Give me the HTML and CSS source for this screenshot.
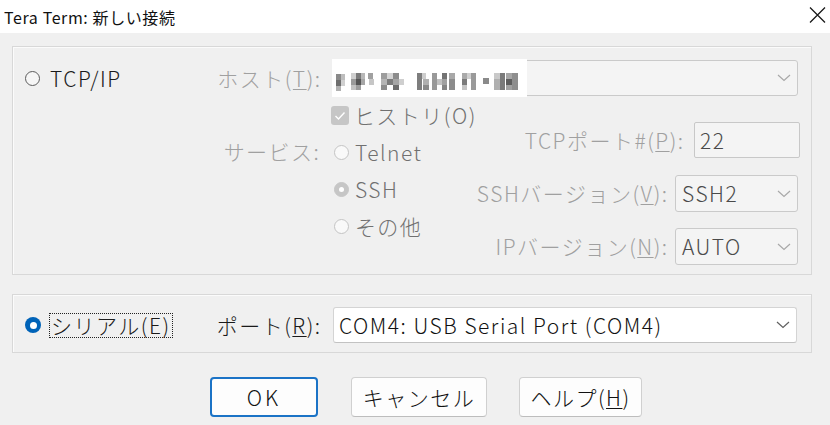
FILE: index.html
```html
<!DOCTYPE html>
<html lang="ja">
<head>
<meta charset="utf-8">
<title>Tera Term: 新しい接続</title>
<link rel="stylesheet" href="styles.css">
</head>
<body>
<div class="titlebar">
  <span class="title">Tera Term: 新しい接続</span>
  <svg class="close" width="17" height="16" viewBox="0 0 17 16"><path d="M1 0.5 L16 15.5 M16 0.5 L1 15.5" stroke="#1a1a1a" stroke-width="1.3" fill="none"/></svg>
</div>
<div class="dialog">
  <div class="group g1">
    <div class="row host-row">
      <div class="lead">
        <span class="radio-item"><span class="radio enabled"></span><span class="opt-text dark">TCP/IP</span></span>
        <span class="field-label">ホスト(<u>T</u>):</span>
      </div>
      <div class="combo disabled host-combo">
        <span class="mosaic">
          <svg width="195" height="38" viewBox="0 0 195 38">
            <rect x="4" y="15" width="5" height="6" fill="#8a8a8a"/><rect x="4" y="21" width="5" height="6" fill="#6e6e6e"/><rect x="4" y="27" width="5" height="5" fill="#b0b0b0"/><rect x="9" y="15" width="4" height="6" fill="#bdbdbd"/><rect x="9" y="21" width="4" height="6" fill="#d0d0d0"/>
            <rect x="19" y="14" width="5" height="6" fill="#cfcfcf"/><rect x="19" y="20" width="5" height="6" fill="#9a9a9a"/><rect x="19" y="26" width="5" height="5" fill="#c2c2c2"/><rect x="24" y="14" width="5" height="6" fill="#7a7a7a"/><rect x="24" y="20" width="5" height="6" fill="#555"/><rect x="24" y="26" width="5" height="5" fill="#9c9c9c"/><rect x="29" y="14" width="4" height="6" fill="#b8b8b8"/><rect x="29" y="20" width="4" height="6" fill="#a6a6a6"/>
            <rect x="36" y="14" width="5" height="6" fill="#a0a0a0"/><rect x="37" y="20" width="5" height="6" fill="#c6c6c6"/>
            <rect x="49" y="14" width="6" height="6" fill="#9d9d9d"/><rect x="49" y="20" width="6" height="6" fill="#b5b5b5"/><rect x="49" y="26" width="6" height="5" fill="#8d8d8d"/><rect x="55" y="14" width="6" height="6" fill="#d4d4d4"/><rect x="55" y="20" width="6" height="6" fill="#7c7c7c"/><rect x="61" y="14" width="6" height="6" fill="#8c8c8c"/><rect x="61" y="20" width="6" height="6" fill="#a5a5a5"/><rect x="61" y="26" width="6" height="5" fill="#6c6c6c"/><rect x="67" y="20" width="5" height="6" fill="#cfcfcf"/>
            <rect x="85" y="14" width="5" height="17" fill="#7e7e7e"/><rect x="90" y="14" width="4" height="6" fill="#cdcdcd"/><rect x="91" y="20" width="6" height="6" fill="#b0b0b0"/><rect x="91" y="26" width="6" height="5" fill="#8a8a8a"/>
            <rect x="100" y="14" width="5" height="17" fill="#999"/><rect x="105" y="20" width="5" height="6" fill="#c2c2c2"/><rect x="110" y="14" width="5" height="6" fill="#737373"/><rect x="110" y="20" width="5" height="6" fill="#a0a0a0"/><rect x="110" y="26" width="5" height="5" fill="#858585"/><rect x="117" y="14" width="6" height="6" fill="#a8a8a8"/><rect x="117" y="20" width="6" height="11" fill="#8c8c8c"/>
            <rect x="130" y="14" width="5" height="6" fill="#aaa"/><rect x="130" y="20" width="5" height="6" fill="#7a7a7a"/><rect x="130" y="26" width="5" height="5" fill="#c4c4c4"/><rect x="135" y="14" width="4" height="6" fill="#d0d0d0"/><rect x="139" y="14" width="5" height="17" fill="#9a9a9a"/>
            <rect x="151" y="19" width="6" height="6" fill="#8a8a8a"/>
            <rect x="162" y="14" width="6" height="6" fill="#c9c9c9"/><rect x="162" y="20" width="6" height="11" fill="#b0b0b0"/><rect x="168" y="14" width="5" height="17" fill="#7a7a7a"/><rect x="174" y="14" width="6" height="6" fill="#a6a6a6"/><rect x="174" y="20" width="6" height="6" fill="#5e5e5e"/><rect x="174" y="26" width="6" height="5" fill="#a0a0a0"/><rect x="180" y="14" width="6" height="17" fill="#8e8e8e"/>
          </svg>
        </span>
        <svg class="chev" width="14" height="8" viewBox="0 0 14 8"><path d="M1 1 L7 6.5 L13 1" stroke="#a8a8a8" stroke-width="1.2" fill="none"/></svg>
      </div>
    </div>
    <div class="lower">
      <div class="svc-col">
        <span class="field-label svc-label">サービス:</span>
      </div>
      <div class="opts">
        <div class="opt-row"><span class="checkbox"><svg width="12" height="10" viewBox="0 0 12 10"><path d="M1.5 5 L4.5 8 L10.5 1.5" stroke="#fff" stroke-width="1.4" fill="none"/></svg></span><span class="opt-text">ヒストリ(O)</span></div>
        <div class="opt-row"><span class="radio disabled"></span><span class="opt-text">Telnet</span></div>
        <div class="opt-row"><span class="radio disabled checked"></span><span class="opt-text">SSH</span></div>
        <div class="opt-row"><span class="radio disabled"></span><span class="opt-text">その他</span></div>
      </div>
      <div class="right-col">
        <div class="field-row tcp-row">
          <span class="field-label">TCPポート#(<u>P</u>):</span>
          <div class="textbox">22</div>
        </div>
        <div class="field-row ver-row">
          <span class="field-label">SSHバージョン(<u>V</u>):</span>
          <div class="combo disabled small-combo"><span class="value">SSH2</span><svg class="chev" width="14" height="8" viewBox="0 0 14 8"><path d="M1 1 L7 6.5 L13 1" stroke="#a8a8a8" stroke-width="1.2" fill="none"/></svg></div>
        </div>
        <div class="field-row ip-row">
          <span class="field-label">IPバージョン(<u>N</u>):</span>
          <div class="combo disabled small-combo"><span class="value">AUTO</span><svg class="chev" width="14" height="8" viewBox="0 0 14 8"><path d="M1 1 L7 6.5 L13 1" stroke="#a8a8a8" stroke-width="1.2" fill="none"/></svg></div>
        </div>
      </div>
    </div>
  </div>
  <div class="group g2">
    <div class="row serial-row">
      <div class="lead">
        <span class="radio-item"><span class="radio selected"></span><span class="opt-text dark focus">シリアル(E)</span></span>
        <span class="field-label dark">ポート(<u>R</u>):</span>
      </div>
      <div class="combo enabled serial-combo"><span class="value">COM4: USB Serial Port (COM4)</span><svg class="chev" width="14" height="8" viewBox="0 0 14 8"><path d="M1 1 L7 6.5 L13 1" stroke="#606060" stroke-width="1.2" fill="none"/></svg></div>
    </div>
  </div>
  <div class="buttons">
    <button class="btn default">OK</button>
    <button class="btn cancel">キャンセル</button>
    <button class="btn help">ヘルプ(<u>H</u>)</button>
  </div>
</div>
</body>
</html>
```

FILE: styles.css
```css
* { box-sizing: border-box; }
html, body { margin: 0; padding: 0; }
body {
  width: 830px;
  height: 425px;
  overflow: hidden;
  background: #f0f0f0;
  font-family: "Noto Sans CJK JP", "Noto Sans", sans-serif;
  font-size: 21px;
  font-weight: 300;
  letter-spacing: 1.5px;
  color: #000;
}
.titlebar {
  height: 33px;
  background: #fff;
  display: flex;
  align-items: center;
  justify-content: space-between;
  padding: 0 4px 0 4px;
}
.title {
  font-size: 16px;
  font-weight: 400;
  letter-spacing: 0.6px;
  color: #111;
  line-height: 1;
}
.close { margin-right: 0; margin-top: -4px; }
.dialog { padding: 13px 18px 0 12px; }
.group {
  border: 1px solid #d8d8d8;
  box-shadow: inset 1px 1px 0 #fbfbfb;
  padding-right: 13px;
}
.g1 { padding-top: 13px; padding-bottom: 9px; }
.g2 { margin-top: 19px; padding-top: 12px; padding-bottom: 9px; }
.row { display: flex; align-items: center; }
.lead {
  width: 307px;
  display: flex;
  align-items: center;
  justify-content: space-between;
  padding-left: 12px;
}
.radio-item { display: flex; align-items: center; gap: 10px; }
.field-label { color: #a0a0a0; white-space: nowrap; line-height: 1; margin-right: -1.5px; }
.field-label.dark { color: #1a1a1a; }
.dark { color: #1a1a1a; }
u { text-decoration-thickness: 1px; text-underline-offset: 2px; }
.opt-text { color: #707070; line-height: 1; white-space: nowrap; }
.opt-text.dark { color: #1a1a1a; }
.focus { outline: 1px dotted #222; outline-offset: 1px; }

.radio {
  display: inline-block;
  width: 15px;
  height: 15px;
  border-radius: 50%;
  flex: none;
}
.radio.enabled { border: 1.5px solid #5c5c5c; background: #f6f6f6; }
.radio.disabled { border: 1px solid #c4c4c4; background: #f9f9f9; }
.radio.disabled.checked { background: #c6c6c6; border-color: #c6c6c6; position: relative; }
.radio.disabled.checked::after {
  content: ""; position: absolute; left: 4px; top: 4px; width: 5px; height: 5px; border-radius: 50%; background: #fff;
}
.radio.selected { width: 16px; height: 16px; background: #0063b8; position: relative; }
.radio.selected::after {
  content: ""; position: absolute; left: 4.5px; top: 4.5px; width: 7px; height: 7px; border-radius: 50%; background: #fff;
}

.combo {
  display: flex;
  align-items: center;
  justify-content: space-between;
  border: 1px solid #cacaca;
  border-radius: 3px;
  background: #f4f4f4;
  height: 36px;
  padding: 0 6px 0 6px;
}
.combo .chev { flex: none; }
.host-combo { flex: 1; margin-left: 12px; padding-left: 0; position: relative; }
.mosaic { display: block; width: 195px; height: 38px; background: #fff; margin: -1px 0 -1px -1px; }
.mosaic svg { display: block; }
.value { color: #4a4a4a; line-height: 1; }
.serial-combo { flex: 1; margin-left: 13px; margin-right: 1px; background: #fff; border-color: #d4d4d4; border-bottom-color: #c2c2c2; padding-left: 5px; }
.serial-combo .value { color: #111; }

.lower { display: flex; }
.svc-col { width: 307px; display: flex; justify-content: flex-end; padding-top: 37px; }
.svc-label { height: 37px; display: flex; align-items: center; }
.opts { margin-left: 12px; padding-top: 1px; }
.opt-row { height: 37px; display: flex; align-items: center; gap: 6px; padding-left: 3px; }
.opt-row:first-child { gap: 5px; padding-left: 0; }
.checkbox {
  width: 18px; height: 19px; border-radius: 3px; background: #c6c6c6;
  display: flex; align-items: center; justify-content: center;
}
.right-col { flex: 1; padding-top: 26px; display: flex; flex-direction: column; }
.field-row { display: flex; align-items: center; justify-content: flex-end; }
.tcp-row { gap: 11px; margin-right: -2px; }
.ver-row { gap: 8px; margin-top: 17px; }
.ip-row { gap: 8px; margin-top: 16px; }
.textbox {
  width: 106px; height: 36px; border: 1px solid #c8c8c8; border-radius: 2px; background: #f4f4f4;
  color: #4a4a4a; display: flex; align-items: center; padding-left: 5px; line-height: 1;
}
.small-combo { width: 123px; height: 37px; }

.buttons { display: flex; gap: 33px; margin-top: 24px; padding-left: 198px; }
.btn {
  height: 40px;
  font-family: inherit;
  font-size: 21px;
  font-weight: 300;
  letter-spacing: 1.5px;
  background: #fdfdfd;
  border: 1px solid #d0d0d0;
  border-bottom-color: #bdbdbd;
  border-radius: 4px;
  color: #111;
  padding: 0;
  line-height: 1;
}
.btn.default { width: 108px; border: 2px solid #1b73c6; letter-spacing: 3px; }
.btn.cancel { width: 136px; }
.btn.help { width: 123px; margin-left: -1px; }
```
